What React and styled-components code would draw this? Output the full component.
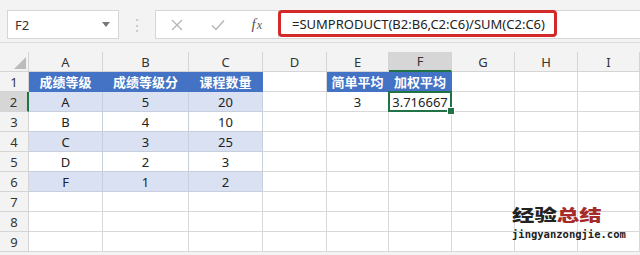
import React from 'react';
import styled, { createGlobalStyle } from 'styled-components';

const GlobalStyle = createGlobalStyle`
  html, body { margin: 0; padding: 0; background: #f3f3f3; }
  body { font-family: "Noto Sans", "Noto Sans CJK SC", sans-serif; }
`;

const columns = ['A', 'B', 'C', 'D', 'E', 'F', 'G', 'H', 'I'];
const widths = [29, 74, 86, 74, 64, 62, 63, 63, 63, 62];

const rows = [
  ['成绩等级', '成绩等级分', '课程数量', '', '简单平均', '加权平均', '', '', ''],
  ['A', '5', '20', '', '3', '3.716667', '', '', ''],
  ['B', '4', '10', '', '', '', '', '', ''],
  ['C', '3', '25', '', '', '', '', '', ''],
  ['D', '2', '3', '', '', '', '', '', ''],
  ['F', '1', '2', '', '', '', '', '', ''],
  ['', '', '', '', '', '', '', '', ''],
  ['', '', '', '', '', '', '', '', ''],
  ['', '', '', '', '', '', '', '', ''],
];

const cellKind = (r, c) => {
  if (r === 0 && (c <= 2 || c === 4 || c === 5)) return 'head';
  if (c <= 2 && r >= 1 && r <= 5) return r % 2 === 1 ? 'band' : 'plain';
  return 'none';
};

const App = () => (
  <Page>
    <GlobalStyle />
    <Toolbar>
      <NameBox>
        <span>F2</span>
        <Caret />
      </NameBox>
      <Dots>⋮</Dots>
      <IconBox>
        <svg width="14" height="14" viewBox="0 0 14 14">
          <path d="M2 2 L12 12 M12 2 L2 12" stroke="#b4b4b4" strokeWidth="1.3" />
        </svg>
        <svg width="16" height="14" viewBox="0 0 16 14">
          <path d="M2 7.5 L6 11.5 L14 2.5" stroke="#b4b4b4" strokeWidth="1.4" fill="none" />
        </svg>
        <Fx>
          <i>f</i><i>x</i>
        </Fx>
      </IconBox>
      <FormulaBar>
        <Highlight>=SUMPRODUCT(B2:B6,C2:C6)/SUM(C2:C6)</Highlight>
      </FormulaBar>
    </Toolbar>
    <Sheet>
      <Grid>
        <Corner>
          <svg width="12" height="12" viewBox="0 0 12 12">
            <path d="M12 0 L12 12 L0 12 Z" fill="#bcbcbc" />
          </svg>
        </Corner>
        {columns.map((col) => (
          <ColHead key={col} $active={col === 'F'}>{col}</ColHead>
        ))}
        {rows.map((row, r) => (
          <React.Fragment key={r}>
            <RowHead $active={r === 1}>{r + 1}</RowHead>
            {row.map((val, c) => (
              <Cell key={c} $kind={cellKind(r, c)} $selected={r === 1 && c === 5}>
                {val}
                {r === 1 && c === 5 && <Handle />}
              </Cell>
            ))}
          </React.Fragment>
        ))}
      </Grid>
      <Watermark>
        <Brand>
          <span>经验</span><Red>总结</Red>
        </Brand>
        <Site>jingyanzongjie.com</Site>
      </Watermark>
    </Sheet>
  </Page>
);

const Page = styled.div`
  width: 640px;
  height: 255px;
  overflow: hidden;
  background: #f3f3f3;
`;

const Toolbar = styled.div`
  height: 43px;
  box-sizing: border-box;
  padding: 10px 0 3px 7px;
  display: flex;
  align-items: stretch;
  border-bottom: 1px solid #dcdcdc;
  margin-bottom: 9px;
`;

const NameBox = styled.div`
  width: 112px;
  box-sizing: border-box;
  background: #fff;
  border: 1px solid #d6d6d6;
  display: flex;
  align-items: center;
  justify-content: space-between;
  padding: 0 8px 0 7px;
  font-size: 13px;
  color: #333;
`;

const Caret = styled.span`
  width: 0;
  height: 0;
  border-left: 4px solid transparent;
  border-right: 4px solid transparent;
  border-top: 5px solid #777;
`;

const Dots = styled.div`
  width: 36px;
  display: flex;
  align-items: center;
  justify-content: center;
  color: #c4c4c4;
  font-size: 16px;
`;

const IconBox = styled.div`
  width: 123px;
  box-sizing: border-box;
  background: #fff;
  border: 1px solid #d6d6d6;
  border-right: none;
  display: flex;
  align-items: center;
  justify-content: space-between;
  padding: 0 16px 0 14px;
`;

const Fx = styled.span`
  font-family: "Liberation Serif", serif;
  font-size: 15px;
  color: #555;
  i:last-child { font-size: 12px; margin-left: 1px; }
`;

const FormulaBar = styled.div`
  flex: 1;
  background: #fff;
  border: 1px solid #d6d6d6;
  border-right: none;
  display: flex;
  align-items: stretch;
`;

const Highlight = styled.div`
  width: 279px;
  box-sizing: border-box;
  border: 3px solid #d22a2a;
  border-radius: 4px;
  margin: -1px 0 1px -1px;
  display: flex;
  align-items: center;
  padding-left: 11px;
  font-size: 13px;
  color: #222;
`;

const Sheet = styled.div`
  position: relative;
`;

const Grid = styled.div`
  display: grid;
  grid-template-columns: ${widths.map((w) => `${w}px`).join(' ')};
  grid-auto-rows: 20px;
  background: #fff;
`;

const Corner = styled.div`
  background: #f3f3f3;
  border-right: 1px solid #d4d4d4;
  border-bottom: 1px solid #d4d4d4;
  display: flex;
  align-items: flex-end;
  justify-content: flex-end;
  padding: 0 2px 2px 0;
  box-sizing: border-box;
`;

const ColHead = styled.div`
  background: ${(p) => (p.$active ? '#d6d6d6' : '#f3f3f3')};
  border-right: 1px solid #d4d4d4;
  border-bottom: ${(p) => (p.$active ? '2px solid #217346' : '1px solid #d4d4d4')};
  box-sizing: border-box;
  display: flex;
  align-items: center;
  justify-content: center;
  font-size: 13px;
  color: #333;
`;

const RowHead = styled.div`
  background: ${(p) => (p.$active ? '#d6d6d6' : '#f3f3f3')};
  border-right: ${(p) => (p.$active ? '2px solid #217346' : '1px solid #d4d4d4')};
  border-bottom: 1px solid #d4d4d4;
  box-sizing: border-box;
  display: flex;
  align-items: center;
  justify-content: center;
  font-size: 13px;
  color: #333;
`;

const cellBg = { head: '#4472c4', band: '#d9e1f2', plain: '#fff', none: '#fff' };

const Cell = styled.div`
  position: relative;
  background: ${(p) => cellBg[p.$kind]};
  color: ${(p) => (p.$kind === 'head' ? '#fff' : '#222')};
  font-weight: ${(p) => (p.$kind === 'head' ? 700 : 400)};
  font-size: 13px;
  border-right: 1px solid ${(p) => (p.$kind === 'head' ? '#4472c4' : p.$kind === 'none' ? '#d8d8d8' : '#c8cfdc')};
  border-bottom: 1px solid ${(p) => (p.$kind === 'head' ? '#4472c4' : p.$kind === 'none' ? '#d8d8d8' : '#c8cfdc')};
  box-sizing: border-box;
  display: flex;
  align-items: center;
  justify-content: center;
  white-space: nowrap;
  ${(p) => p.$selected && `
    &::after {
      content: '';
      position: absolute;
      inset: -1px -1px -1px -1px;
      border: 2px solid #217346;
      pointer-events: none;
    }
  `}
`;

const Handle = styled.span`
  position: absolute;
  right: -4px;
  bottom: -4px;
  width: 6px;
  height: 6px;
  background: #217346;
  border: 1px solid #fff;
  z-index: 2;
`;

const Watermark = styled.div`
  position: absolute;
  right: 14px;
  top: 154px;
  width: 114px;
  display: flex;
  flex-direction: column;
  align-items: flex-start;
`;

const Brand = styled.div`
  font-family: "Noto Sans CJK SC", sans-serif;
  font-weight: 900;
  font-size: 16px;
  line-height: 17px;
  color: #222;
  white-space: nowrap;
  transform: scaleX(1.4);
  transform-origin: left center;
`;

const Red = styled.span`
  color: #a52a2a;
`;

const Site = styled.div`
  margin-top: 6px;
  font-family: "DejaVu Sans Mono", monospace;
  font-weight: 700;
  font-size: 10.5px;
  line-height: 11px;
  color: #222;
  white-space: nowrap;
`;

export default App;
